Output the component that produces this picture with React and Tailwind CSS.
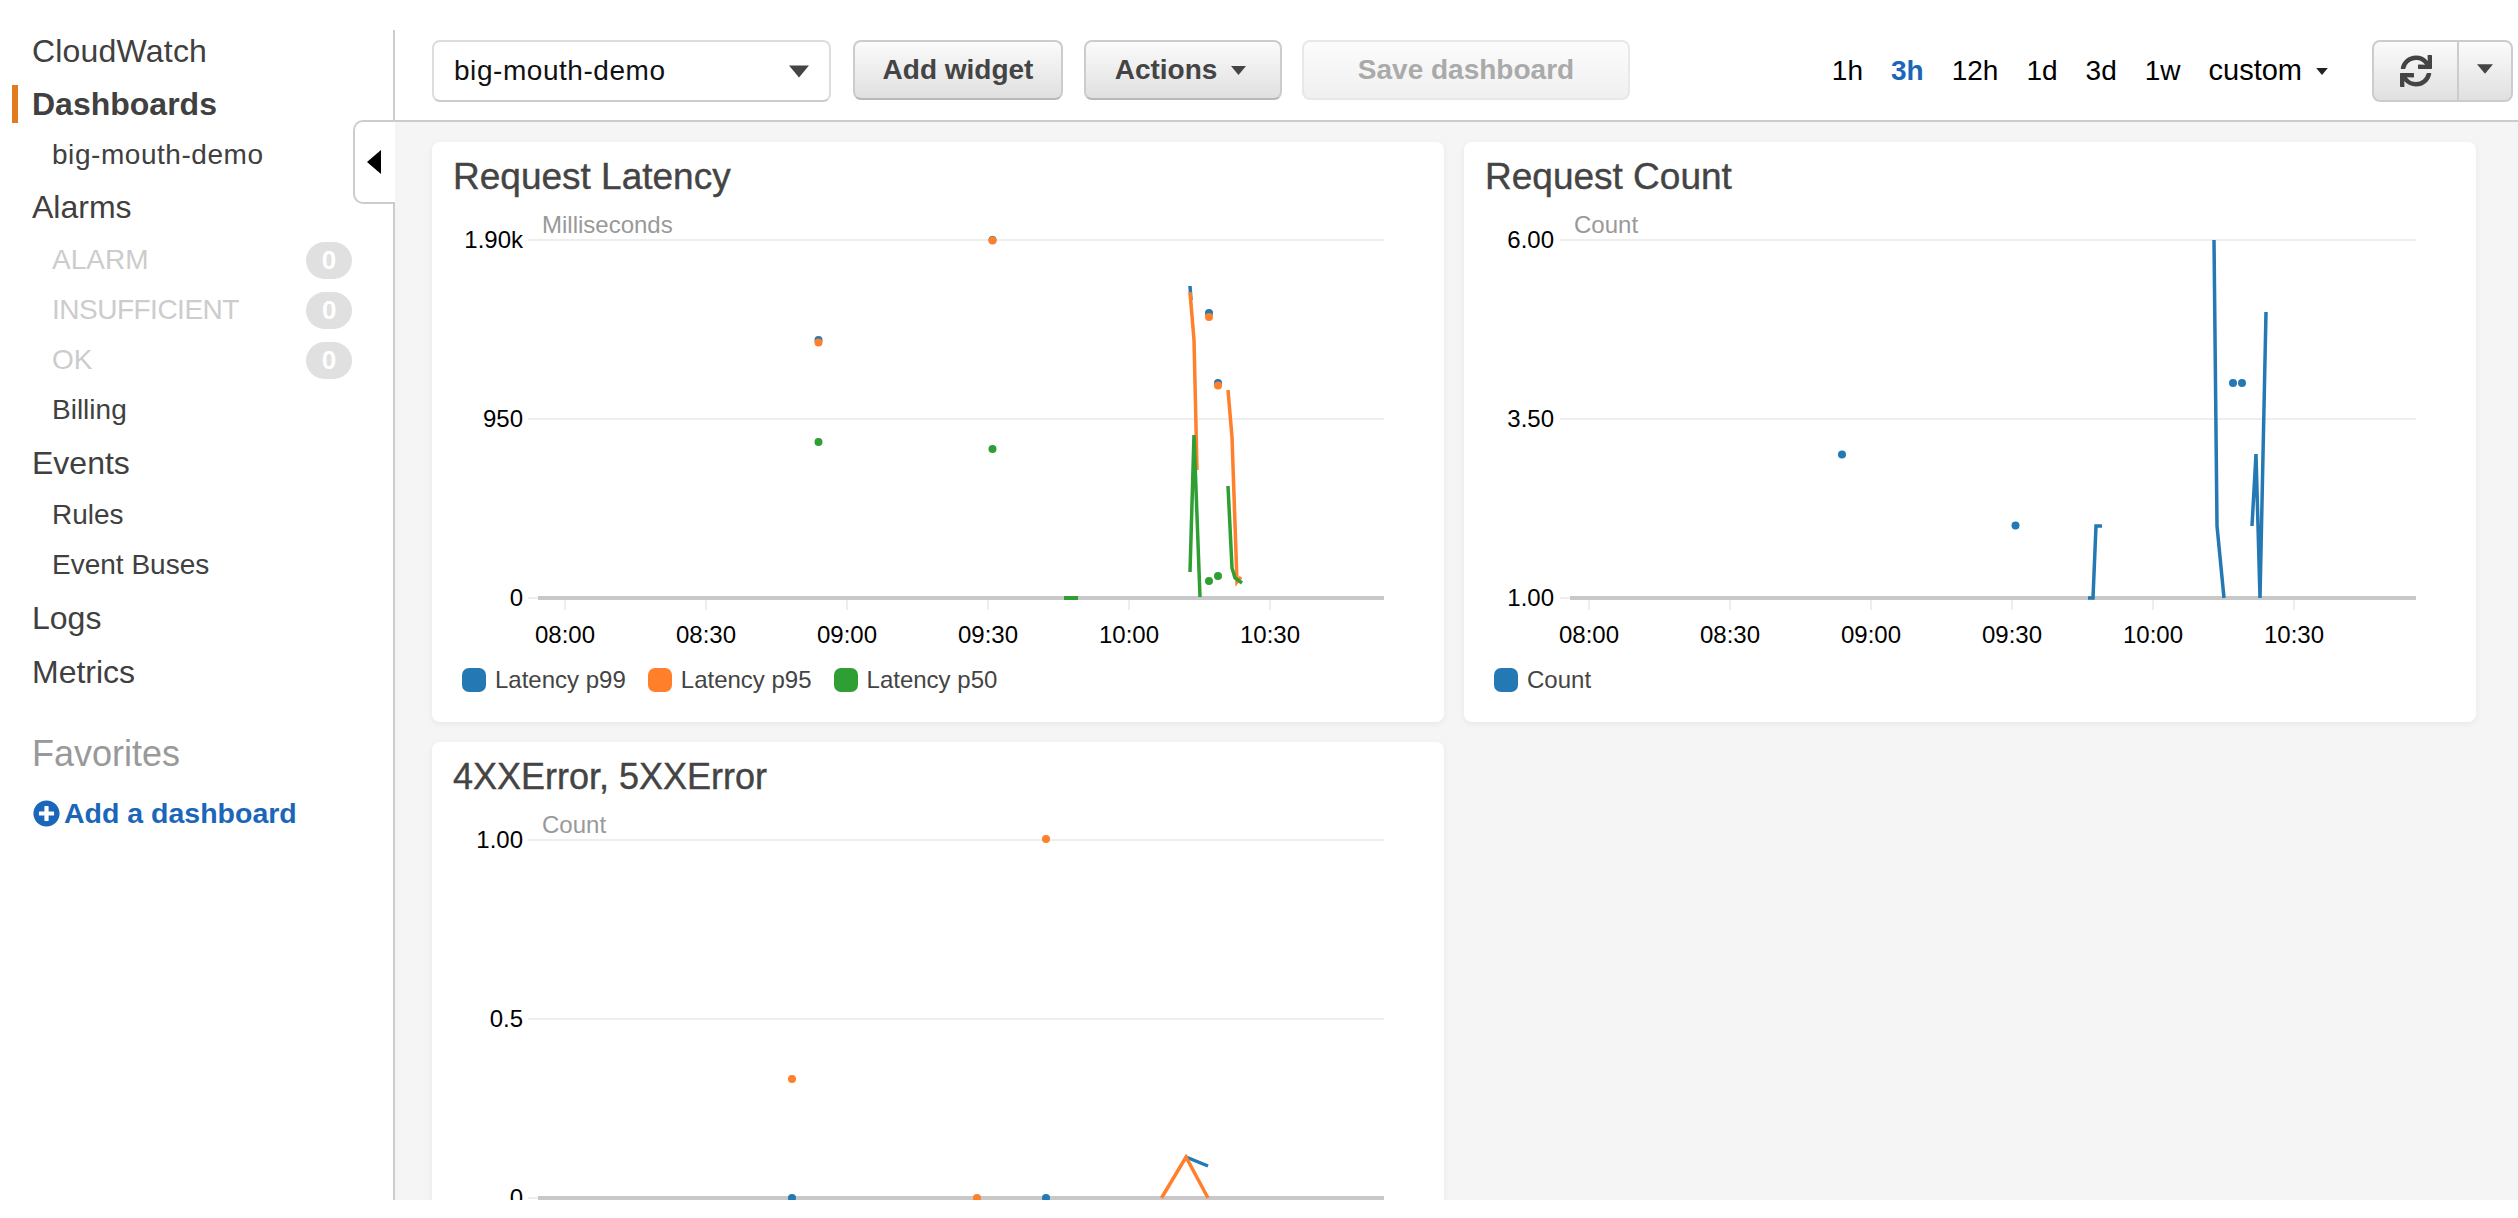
import { FaPlusCircle, FaSync } from "react-icons/fa";

const BLUE = "#2478b4";
const ORANGE = "#ff7f2a";
const GREEN = "#2f9e33";

const TIME_RANGES = ["1h", "3h", "12h", "1d", "3d", "1w"];
const TICK_LABELS = ["08:00", "08:30", "09:00", "09:30", "10:00", "10:30"];

function Caret({ w, h, color }) {
  return (
    <svg width={w} height={h} viewBox="0 0 10 6" className="block shrink-0" aria-hidden="true">
      <polygon points="0,0 10,0 5,6" fill={color} />
    </svg>
  );
}

function NavMain({ children, className = "" }) {
  return <div className={`h-[54px] pl-[32px] text-[32px] leading-[54px] text-[#404040] ${className}`}>{children}</div>;
}

function NavSub({ children, className = "" }) {
  return <div className={`h-[50px] pl-[52px] text-[28px] leading-[50px] text-[#404040] ${className}`}>{children}</div>;
}

function AlarmRow({ label, className = "" }) {
  return (
    <div className={`flex h-[50px] items-center justify-between pl-[52px] pr-[41px] text-[28px] text-[#ccc] ${className}`}>
      <span>{label}</span>
      <span className="flex h-[37px] w-[46px] items-center justify-center rounded-full bg-[#e0e0e0] text-[26px] font-bold text-white">
        0
      </span>
    </div>
  );
}

function Sidebar() {
  return (
    <aside className="w-[393px] shrink-0 pt-[24px]">
      <NavMain className="tracking-[0.2px]">CloudWatch</NavMain>
      <div className="flex h-[52px] items-center pl-[12px] text-[32px] font-bold text-[#404040]">
        <span className="h-[38px] w-[6px] bg-[#e07b20]" />
        <span className="ml-[14px]">Dashboards</span>
      </div>
      <NavSub className="tracking-[0.55px]">big-mouth-demo</NavSub>
      <NavMain>Alarms</NavMain>
      <AlarmRow label="ALARM" className="mt-px" />
      <AlarmRow label="INSUFFICIENT" className="tracking-[-0.5px]" />
      <AlarmRow label="OK" />
      <NavSub>Billing</NavSub>
      <NavMain className="mt-px h-[53px]">Events</NavMain>
      <NavSub>Rules</NavSub>
      <NavSub>Event Buses</NavSub>
      <NavMain className="mt-px">Logs</NavMain>
      <NavMain>Metrics</NavMain>
      <div className="mt-[25px] h-[60px] pl-[32px] text-[36px] leading-[60px] text-[#999]">Favorites</div>
      <div className="mt-[4px] flex h-[50px] items-center pl-[33px] text-[28.5px] font-bold text-[#1b66b8]">
        <FaPlusCircle className="h-[27px] w-[27px]" />
        <span className="ml-[4px]">Add a dashboard</span>
      </div>
    </aside>
  );
}

function ToolButton({ children, className = "" }) {
  return (
    <button
      type="button"
      className={`flex h-[60px] items-center justify-center rounded-[8px] border-2 border-[#ccc] border-b-[#b8b8b8] bg-gradient-to-b from-[#fbfbfb] to-[#e0e0e0] text-[28px] font-bold text-[#444] ${className}`}
    >
      {children}
    </button>
  );
}

function Toolbar() {
  return (
    <header className="flex h-[122px] shrink-0 items-start border-b-2 border-[#ccc] pl-[37px] pr-[5px] pt-[40px]">
      <div className="flex h-[62px] w-[399px] items-center justify-between rounded-[8px] border-2 border-[#ddd] border-b-[#ccc] pl-[20px] pr-[20px] text-[28px] text-[#111]">
        <span className="tracking-[0.55px]">big-mouth-demo</span>
        <Caret w={20} h={13} color="#444" />
      </div>
      <ToolButton className="ml-[22px] w-[210px]">Add widget</ToolButton>
      <ToolButton className="ml-[21px] w-[198px] pr-[5px]">
        Actions
        <span className="ml-[14px]">
          <Caret w={15} h={9} color="#444" />
        </span>
      </ToolButton>
      <button
        type="button"
        className="ml-[20px] flex h-[60px] w-[328px] items-center justify-center rounded-[8px] border-2 border-[#e8e8e8] bg-gradient-to-b from-[#fcfcfc] to-[#f0f0f0] text-[28px] font-bold text-[#aaa]"
      >
        Save dashboard
      </button>

      <div className="ml-auto flex h-[62px] items-center gap-[28px] text-[28px] text-black">
        {TIME_RANGES.map((range) => (
          <span key={range} className={range === "3h" ? "font-bold text-[#1b66b8]" : ""}>
            {range}
          </span>
        ))}
        <span className="flex items-center text-[29px]">
          custom
          <span className="ml-[14px]">
            <Caret w={12} h={7} color="#222" />
          </span>
        </span>
      </div>

      <div className="ml-[44px] flex h-[62px] w-[141px] rounded-[8px] border-2 border-[#ccc] bg-gradient-to-b from-[#fbfbfb] to-[#e0e0e0]">
        <div className="flex w-[85px] items-center justify-center border-r-2 border-[#ccc] text-[#444]">
          <FaSync className="h-[32px] w-[32px]" />
        </div>
        <div className="flex flex-1 items-center justify-center pb-[4px]">
          <Caret w={16} h={10} color="#444" />
        </div>
      </div>
    </header>
  );
}

// chart data is written in page coordinates, the viewBox takes care of the card offset
function Chart({ originX, originY, top, tickStart, gridStart, axisStart, gridEnd, labelEnd, unitX, unit, yLabels, showTimes = true, children }) {
  const gridYs = [top, top + 179];
  const axisY = top + 358;
  const ticks = TICK_LABELS.map((label, i) => ({ label, x: tickStart + i * 141 }));

  return (
    <svg viewBox={`${originX} ${originY} 1012 450`} className="block h-[450px] w-[1012px]">
      <text x={unitX} y={top - 7} fontSize="24" fill="#999">
        {unit}
      </text>
      {gridYs.map((y) => (
        <line key={y} x1={gridStart} x2={gridEnd} y1={y} y2={y} stroke="#eee" strokeWidth="2" />
      ))}
      <line x1={gridStart} x2={axisStart} y1={axisY} y2={axisY} stroke="#eee" strokeWidth="2" />
      <line x1={axisStart} x2={gridEnd} y1={axisY} y2={axisY} stroke="#c8c8c8" strokeWidth="4" />
      {yLabels.map((label, i) => (
        <text key={label} x={labelEnd} y={top + i * 179 + 8} fontSize="24" textAnchor="end" fill="#000">
          {label}
        </text>
      ))}
      {showTimes &&
        ticks.map((t) => (
          <g key={t.label}>
            <line x1={t.x} x2={t.x} y1={axisY + 2} y2={axisY + 12} stroke="#eee" strokeWidth="2" />
            <text x={t.x} y={axisY + 45} fontSize="24" textAnchor="middle" fill="#000">
              {t.label}
            </text>
          </g>
        ))}
      {children}
    </svg>
  );
}

function Trace({ points, color, width = 3.5 }) {
  return <polyline points={points} fill="none" stroke={color} strokeWidth={width} strokeLinejoin="miter" />;
}

function Dots({ items, color }) {
  return items.map(([cx, cy]) => <circle key={`${cx}-${cy}`} cx={cx} cy={cy} r="4" fill={color} />);
}

function Legend({ items, className = "" }) {
  return (
    <div className={`mt-[8px] flex items-center gap-[22px] text-[24px] leading-[24px] text-[#444] ${className}`}>
      {items.map((item) => (
        <div key={item.label} className="flex items-center gap-[9px]">
          <span className={`h-[24px] w-[24px] rounded-[7px] ${item.swatch}`} />
          <span>{item.label}</span>
        </div>
      ))}
    </div>
  );
}

function Card({ title, titleSize = "text-[37px]", children }) {
  return (
    <section className="h-[580px] rounded-[8px] bg-white shadow-[0_2px_6px_rgba(0,0,0,0.06)]">
      <h2 className={`h-[68px] pl-[21px] font-normal leading-[70px] text-[#444] [-webkit-text-stroke:0.4px_#444] ${titleSize}`}>
        {title}
      </h2>
      {children}
    </section>
  );
}

function Dashboard() {
  return (
    <main className="grid flex-1 grid-cols-[1012px_1012px] content-start gap-x-[20px] gap-y-[20px] overflow-hidden bg-[#f5f5f5] pl-[37px] pt-[20px]">
      <Card title="Request Latency">
        <Chart
          originX={432}
          originY={210}
          top={240}
          tickStart={565}
          gridStart={528}
          axisStart={538}
          gridEnd={1384}
          labelEnd={523}
          unitX={542}
          unit="Milliseconds"
          yLabels={["1.90k", "950", "0"]}
        >
          <line x1="1064" x2="1078" y1="598" y2="598" stroke={GREEN} strokeWidth="4" />
          <Trace points="1190,286 1191,300" color={BLUE} />
          <Trace points="1190,292 1194,340 1197,470" color={ORANGE} />
          <Trace points="1190,572 1194,435 1200,597" color={GREEN} />
          <Trace points="1228,390 1232,437 1237,582 1241,577" color={ORANGE} />
          <Trace points="1228,486 1232,568 1235,578 1242,583" color={GREEN} />
          <Dots items={[[818.5, 340], [1209, 313], [1218, 383], [992.5, 240]]} color={BLUE} />
          <Dots items={[[818.5, 342.5], [992.5, 240.5], [1209, 317], [1218, 385.5]]} color={ORANGE} />
          <Dots items={[[818.5, 442], [992.5, 449], [1209, 581], [1218, 576]]} color={GREEN} />
        </Chart>
        <Legend
          className="pl-[30px]"
          items={[
            { label: "Latency p99", swatch: "bg-[#2478b4]" },
            { label: "Latency p95", swatch: "bg-[#ff7f2a]" },
            { label: "Latency p50", swatch: "bg-[#2f9e33]" },
          ]}
        />
      </Card>

      <Card title="Request Count">
        <Chart
          originX={1464}
          originY={210}
          top={240}
          tickStart={1589}
          gridStart={1560}
          axisStart={1570}
          gridEnd={2416}
          labelEnd={1554}
          unitX={1574}
          unit="Count"
          yLabels={["6.00", "3.50", "1.00"]}
        >
          <Trace points="2088,598 2093,598 2096,526 2102,526" color={BLUE} />
          <Trace points="2214,240 2217,526 2224,598" color={BLUE} />
          <Trace points="2252,526 2256,454 2260,598 2266,312" color={BLUE} />
          <Dots items={[[1842, 454.5], [2015.5, 525.5], [2233, 383], [2242, 383]]} color={BLUE} />
        </Chart>
        <Legend className="pl-[30px]" items={[{ label: "Count", swatch: "bg-[#2478b4]" }]} />
      </Card>

      <Card title="4XXError, 5XXError" titleSize="text-[36px]">
        <Chart
          originX={432}
          originY={810}
          top={840}
          tickStart={565}
          gridStart={528}
          axisStart={538}
          gridEnd={1384}
          labelEnd={523}
          unitX={542}
          unit="Count"
          yLabels={["1.00", "0.5", "0"]}
          showTimes={false}
        >
          <Trace points="1186,1157 1208,1166" color={BLUE} />
          <Trace points="1161.5,1198 1186,1157 1208,1198" color={ORANGE} />
          <Dots items={[[792, 1198], [1046, 1198]]} color={BLUE} />
          <Dots items={[[1046, 839], [792, 1079], [977, 1198]]} color={ORANGE} />
        </Chart>
      </Card>
    </main>
  );
}

export default function App() {
  return (
    <div className="relative flex h-[1218px] w-[2518px] overflow-hidden bg-white font-['Liberation_Sans',Arial,sans-serif]">
      <Sidebar />
      <div className="mt-[30px] h-[1170px] w-[2px] shrink-0 bg-[#ccc]" />
      <div className="flex h-[1200px] min-w-0 flex-1 flex-col">
        <Toolbar />
        <Dashboard />
      </div>

      {/* collapse tab sits over the sidebar divider */}
      <div className="absolute left-[353px] top-[120px] flex h-[84px] w-[42px] items-center rounded-l-[10px] border-2 border-r-0 border-[#ccc] bg-white pl-[12px]">
        <svg width="14" height="24" viewBox="0 0 14 24" aria-hidden="true">
          <polygon points="14,0 14,24 0,12" fill="#000" />
        </svg>
      </div>
    </div>
  );
}
